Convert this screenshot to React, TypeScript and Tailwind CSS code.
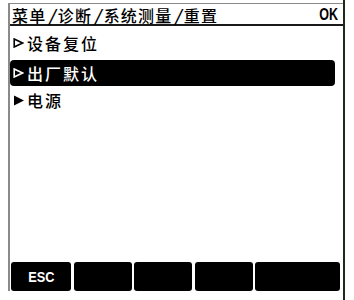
import React from 'react'

const CJK = { fontFamily: '"Noto Sans CJK SC", "Noto Sans", sans-serif' }
const LAT = { fontFamily: '"Liberation Sans", Arial, sans-serif' }

function Tri({ filled, white }: { filled?: boolean; white?: boolean }) {
  const c = white ? '#ffffff' : '#000000'
  if (filled) {
    return (
      <svg width="12" height="11" viewBox="0 0 12 11" className="shrink-0">
        <polygon points="1,0.5 11,5.5 1,10.5" fill={c} />
      </svg>
    )
  }
  return (
    <svg width="11" height="10" viewBox="0 0 11 10" className="shrink-0">
      <polygon points="1.2,1 9.5,5 1.2,9" fill="none" stroke={c} strokeWidth="1.6" strokeLinejoin="miter" />
    </svg>
  )
}

function Row({ label, active, filled }: { label: string; active?: boolean; filled?: boolean }) {
  return (
    <div
      className={`flex items-center h-full pl-[3px] ${active ? 'bg-black text-white rounded-[4px] w-[325px]' : 'text-black'}`}
    >
      <div className="w-[14px] flex justify-start">
        <Tri filled={filled} white={active} />
      </div>
      <span className="text-[16px] tracking-[2px] leading-none font-medium" style={CJK}>
        {label}
      </span>
    </div>
  )
}

const SOFTKEYS = [
  { label: 'ESC', w: 'w-[60px]' },
  { label: '', w: 'w-[58px]' },
  { label: '', w: 'w-[58px]' },
  { label: '', w: 'w-[58px]' },
  { label: '', w: 'w-[85px]' },
]

export default function App() {
  return (
    <div className="w-[354px] h-[300px] bg-white flex">
      <div className="ml-[8px] mt-[3px] w-[335px] h-[288px] border-l-2 border-t border-[#8a8a8a] flex flex-col">
        {/* header */}
        <div className="h-[22px] border-b-2 border-[#1a1a1a] flex items-end justify-between pl-[2px] pr-[5px] pb-[1px]">
          <span className="text-[16px] tracking-[1.2px] leading-none text-black font-medium" style={CJK}>
            菜单<span className="mx-[2px] italic font-bold">/</span>诊断<span className="mx-[2px] italic font-bold">/</span>系统测量<span className="mx-[2px] italic font-bold">/</span>重置
          </span>
          <span
            className="inline-block text-[16px] font-bold leading-none text-black scale-x-[0.78] origin-right"
            style={LAT}
          >
            OK
          </span>
        </div>

        {/* menu */}
        <div className="h-[32px] pt-[2px]">
          <Row label="设备复位" />
        </div>
        <div className="h-[26px] mt-[2px]">
          <Row label="出厂默认" active />
        </div>
        <div className="h-[28px]">
          <Row label="电源" filled />
        </div>

        <div className="flex-1" />

        {/* softkeys */}
        <div className="h-[29px] flex gap-[2.5px] pl-[1px]">
          {SOFTKEYS.map((k, i) => (
            <div
              key={i}
              className={`${k.w} h-full bg-black rounded-[3px] flex items-center justify-center text-white`}
            >
              <span className="inline-block text-[15px] font-bold leading-none scale-x-[0.85]" style={LAT}>
                {k.label}
              </span>
            </div>
          ))}
        </div>
      </div>
      <div className="w-[2px] h-full bg-[#1c2a1c]" />
    </div>
  )
}
